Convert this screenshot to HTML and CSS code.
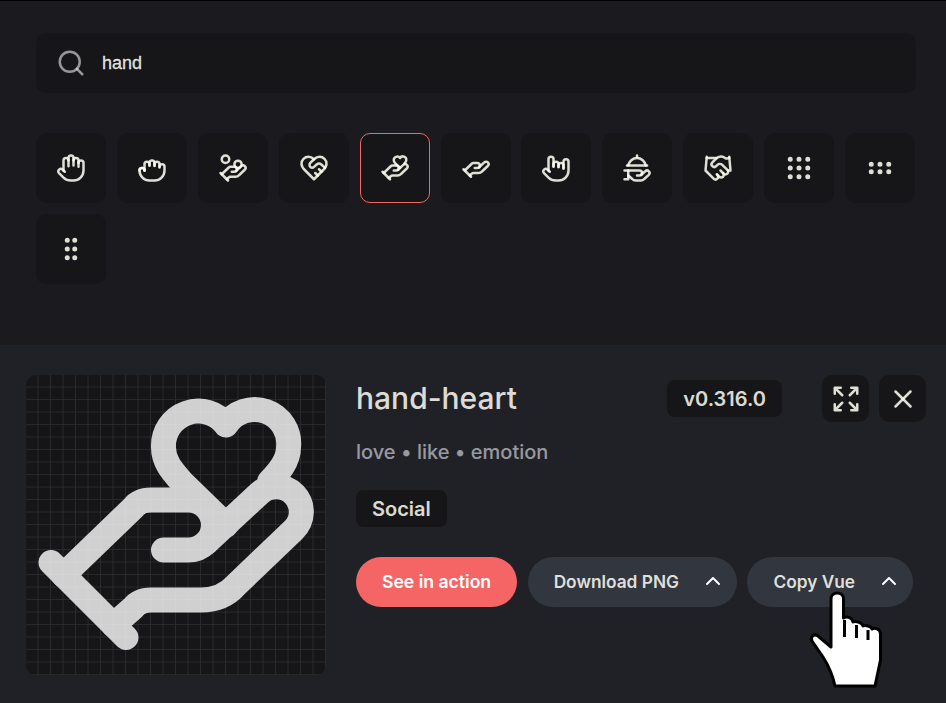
FILE: index.html
```html
<!DOCTYPE html>
<html lang="en">
<head>
    <meta charset="UTF-8">
    <title>hand-heart</title>
    <link rel="stylesheet" href="styles.css">
</head>
<body>
    <div class="browse">
        <!-- Search -->
        <div class="search">
            <svg class="icon search-icon" viewBox="0 0 24 24"><circle cx="11" cy="11" r="8"/><path d="m21 21-4.3-4.3"/></svg>
            <span class="search-text">hand</span>
        </div>

        <!-- Results -->
        <div class="icon-grid">
            <div class="tile"><svg class="icon" viewBox="0 0 24 24"><path d="M18 11V6a2 2 0 0 0-2-2v0a2 2 0 0 0-2 2v0"/><path d="M14 10V4a2 2 0 0 0-2-2v0a2 2 0 0 0-2 2v2"/><path d="M10 10.5V6a2 2 0 0 0-2-2v0a2 2 0 0 0-2 2v8"/><path d="M18 8a2 2 0 1 1 4 0v6a8 8 0 0 1-8 8h-2c-2.8 0-4.5-.86-5.99-2.34l-3.6-3.6a2 2 0 0 1 2.83-2.82L7 15"/></svg></div>
            <div class="tile"><svg class="icon" viewBox="0 0 24 24"><path d="M18 11.5V9a2 2 0 0 0-2-2v0a2 2 0 0 0-2 2v1.4"/><path d="M14 10V8a2 2 0 0 0-2-2v0a2 2 0 0 0-2 2v2"/><path d="M10 9.9V9a2 2 0 0 0-2-2v0a2 2 0 0 0-2 2v5"/><path d="M6 14v0a2 2 0 0 0-2-2v0a2 2 0 0 0-2 2v0"/><path d="M18 11v0a2 2 0 1 1 4 0v3a8 8 0 0 1-8 8h-4a8 8 0 0 1-8-8 2 2 0 1 1 4 0"/></svg></div>
            <div class="tile"><svg class="icon" viewBox="0 0 24 24"><path d="M11 15h2a2 2 0 1 0 0-4h-3c-.6 0-1.1.2-1.4.6L3 17"/><path d="m7 21 1.6-1.4c.3-.4.8-.6 1.4-.6h4c1.1 0 2.1-.4 2.8-1.2l4.6-4.4a2 2 0 0 0-2.75-2.91l-4.2 3.9"/><path d="m2 16 6 6"/><circle cx="16" cy="9" r="2.9"/><circle cx="6" cy="5" r="3"/></svg></div>
            <div class="tile"><svg class="icon" viewBox="0 0 24 24"><path d="M19 14c1.49-1.46 3-3.21 3-5.5A5.5 5.5 0 0 0 16.5 3c-1.76 0-3 .5-4.5 2-1.5-1.5-2.74-2-4.5-2A5.5 5.5 0 0 0 2 8.5c0 2.3 1.5 4.05 3 5.5l7 7Z"/><path d="M12 5 9.04 7.96a2.17 2.17 0 0 0 0 3.08v0c.82.82 2.13.85 3 .07l2.07-1.9a2.82 2.82 0 0 1 3.79 0l2.96 2.66"/><path d="m18 15-2-2"/><path d="m15 18-2-2"/></svg></div>
            <div class="tile tile-active"><svg class="icon" viewBox="0 0 24 24"><path d="M11 14h2a2 2 0 1 0 0-4h-3c-.6 0-1.1.2-1.4.6L3 16"/><path d="m7 20 1.6-1.4c.3-.4.8-.6 1.4-.6h4c1.1 0 2.1-.4 2.8-1.2l4.6-4.4a2 2 0 0 0-2.75-2.91l-4.2 3.9"/><path d="m2 15 6 6"/><path d="M19.5 8.5c.7-.7 1.5-1.6 1.5-2.7A2.73 2.73 0 0 0 16 4a2.78 2.78 0 0 0-5 1.8c0 1.2.8 2 1.5 2.8L16 12"/></svg></div>
            <div class="tile"><svg class="icon" viewBox="0 0 24 24"><path d="M11 12h2a2 2 0 1 0 0-4h-3c-.6 0-1.1.2-1.4.6L3 14"/><path d="m7 18 1.6-1.4c.3-.4.8-.6 1.4-.6h4c1.1 0 2.1-.4 2.8-1.2l4.6-4.4a2 2 0 0 0-2.75-2.91l-4.2 3.9"/><path d="m2 13 6 6"/></svg></div>
            <div class="tile"><svg class="icon" viewBox="0 0 24 24"><path d="M18 12.5V10a2 2 0 0 0-2-2v0a2 2 0 0 0-2 2v1.4"/><path d="M14 11V9a2 2 0 1 0-4 0v2"/><path d="M10 10.5V5a2 2 0 1 0-4 0v9"/><path d="m7 15-1.76-1.76a2 2 0 0 0-2.83 2.82l3.6 3.6C7.5 21.14 9.2 22 12 22h2a8 8 0 0 0 8-8V7a2 2 0 1 0-4 0v5"/></svg></div>
            <div class="tile"><svg class="icon" viewBox="0 0 24 24"><path d="M12 3V2"/><path d="M5 10a7.1 7.1 0 0 1 14 0"/><path d="M4 10h16"/><path d="M2 14h12a2 2 0 1 1 0 4h-2"/><path d="m15.4 17.4 3.2-2.8a2 2 0 0 1 2.8 2.9l-3.6 3.3c-.7.8-1.7 1.2-2.8 1.2h-4c-1.1 0-2.1-.4-2.8-1.2L5 18"/><path d="M5 14v7H2"/></svg></div>
            <div class="tile"><svg class="icon" viewBox="0 0 24 24"><path d="m11 17 2 2a1 1 0 1 0 3-3"/><path d="m14 14 2.5 2.5a1 1 0 1 0 3-3l-3.88-3.88a3 3 0 0 0-4.24 0l-.88.88a1 1 0 1 1-3-3l2.81-2.81a5.79 5.79 0 0 1 7.06-.87l.47.28a2 2 0 0 0 1.42.25L21 4"/><path d="m21 3 1 11h-2"/><path d="M3 3 2 14l6.5 6.5a1 1 0 1 0 3-3"/><path d="M3 4h8"/></svg></div>
            <div class="tile"><svg class="icon" viewBox="0 0 24 24"><circle cx="12" cy="5" r="1"/><circle cx="19" cy="5" r="1"/><circle cx="5" cy="5" r="1"/><circle cx="12" cy="12" r="1"/><circle cx="19" cy="12" r="1"/><circle cx="5" cy="12" r="1"/><circle cx="12" cy="19" r="1"/><circle cx="19" cy="19" r="1"/><circle cx="5" cy="19" r="1"/></svg></div>
            <div class="tile"><svg class="icon" viewBox="0 0 24 24"><circle cx="12" cy="9" r="1"/><circle cx="19" cy="9" r="1"/><circle cx="5" cy="9" r="1"/><circle cx="12" cy="15" r="1"/><circle cx="19" cy="15" r="1"/><circle cx="5" cy="15" r="1"/></svg></div>
            <div class="tile"><svg class="icon" viewBox="0 0 24 24"><circle cx="9" cy="12" r="1"/><circle cx="9" cy="5" r="1"/><circle cx="9" cy="19" r="1"/><circle cx="15" cy="12" r="1"/><circle cx="15" cy="5" r="1"/><circle cx="15" cy="19" r="1"/></svg></div>
        </div>
    </div>

    <!-- Selected icon -->
    <div class="detail">
        <div class="preview">
            <svg class="preview-svg" viewBox="0 0 24 24">
                <defs>
                    <pattern id="gridCell" width="1" height="1" patternUnits="userSpaceOnUse">
                        <path class="grid-line" d="M1 0V1M0 1H1"/>
                    </pattern>
                </defs>
                <rect width="24" height="24" fill="url(#gridCell)"/>
                <g class="preview-icon">
                    <path d="M11 14h2a2 2 0 1 0 0-4h-3c-.6 0-1.1.2-1.4.6L3 16"/>
                    <path d="m7 20 1.6-1.4c.3-.4.8-.6 1.4-.6h4c1.1 0 2.1-.4 2.8-1.2l4.6-4.4a2 2 0 0 0-2.75-2.91l-4.2 3.9"/>
                    <path d="m2 15 6 6"/>
                    <path d="M19.5 8.5c.7-.7 1.5-1.6 1.5-2.7A2.73 2.73 0 0 0 16 4a2.78 2.78 0 0 0-5 1.8c0 1.2.8 2 1.5 2.8L16 12"/>
                </g>
            </svg>
        </div>

        <div class="info">
            <div class="info-head">
                <h1 class="icon-name">hand-heart</h1>
                <span class="version">v0.316.0</span>
                <button class="square-btn"><svg class="icon" viewBox="0 0 24 24"><path d="m21 21-6-6m6 6v-4.8m0 4.8h-4.8"/><path d="M3 16.2V21m0 0h4.8M3 21l6-6"/><path d="M21 7.8V3m0 0h-4.8M21 3l-6 6"/><path d="M3 7.8V3m0 0h4.8M3 3l6 6"/></svg></button>
                <button class="square-btn"><svg class="icon" viewBox="0 0 24 24"><path d="M18 6 6 18"/><path d="m6 6 12 12"/></svg></button>
            </div>
            <p class="tags">love • like • emotion</p>
            <span class="category">Social</span>
            <div class="actions">
                <button class="pill pill-brand">See in action</button>
                <button class="pill">Download PNG <svg class="chevron" viewBox="0 0 24 24"><path d="m18 15-6-6-6 6"/></svg></button>
                <button class="pill">Copy Vue <svg class="chevron" viewBox="0 0 24 24"><path d="m18 15-6-6-6 6"/></svg></button>
            </div>
        </div>
    </div>

    <!-- Mouse pointer from the screen capture -->
    <svg class="pointer" viewBox="0 0 85 105">
        <path class="pointer-hand" d="M26 11C26 3 38.5 3 38.5 11V30C41 28 47 29 48 34C50 33 57 34 58 38C60 37 66 38 67 41C70 39 75.500 41 75.500 46V72L70 98H30C28 88 23 77 18 69L7 53C5 49 9 45 13 48L26 59Z"/>
        <path class="pointer-gap" d="M39.500 32V49M51.500 37V50M63 42V52"/>
    </svg>
</body>
</html>
```

FILE: styles.css
```css
* {
    box-sizing: border-box;
}

body {
    margin: 0;
    height: 703px;
    overflow: hidden;
    position: relative;
    background-color: #1b1b1f;
    color: rgba(255, 255, 245, 0.86);
    font-family: Inter, sans-serif;
    border-top: 1px solid #000;
}

.icon {
    width: 30px;
    height: 30px;
    fill: none;
    stroke: currentColor;
    stroke-width: 2;
    stroke-linecap: round;
    stroke-linejoin: round;
}

/* Search and results */
.browse {
    padding: 32px 30px 61px 36px;
}

.search {
    display: flex;
    align-items: center;
    gap: 16px;
    height: 60px;
    padding-left: 20px;
    background-color: #161618;
    border-radius: 10px;
}

.search-icon {
    color: rgba(235, 235, 245, 0.6);
}

.search-text {
    font-family: "Liberation Sans", sans-serif;
    font-size: 18px;
    -webkit-text-stroke: 0.3px currentColor;
}

.icon-grid {
    display: grid;
    grid-template-columns: repeat(11, 70px);
    column-gap: 10.91px;
    row-gap: 11px;
    margin-top: 40px;
}

.tile {
    display: flex;
    align-items: center;
    justify-content: center;
    height: 70px;
    background-color: #161618;
    border-radius: 10px;
}

.tile-active {
    border: 1px solid #f56565;
}

/* Detail panel */
.detail {
    display: flex;
    gap: 30px;
    height: 358px;
    padding: 30px 20px 0 26px;
    background-color: #202127;
}

.preview {
    width: 300px;
    height: 300px;
    flex-shrink: 0;
    background-color: #161618;
    border-radius: 10px;
    overflow: hidden;
}

.preview-svg {
    display: block;
    width: 100%;
    height: 100%;
}

.grid-line {
    fill: none;
    stroke: #777;
    stroke-opacity: 0.26;
    stroke-width: 0.12;
}

.preview-icon {
    fill: none;
    stroke: #fff;
    stroke-width: 2;
    stroke-linecap: round;
    stroke-linejoin: round;
    opacity: 0.8;
}

.info {
    flex: 1;
}

.info-head {
    display: flex;
    align-items: center;
    gap: 10px;
}

.icon-name {
    flex: 1;
    margin: 0;
    font-size: 30px;
    font-weight: 530;
    line-height: 47px;
}

.version {
    margin-right: 30px;
    padding: 0 16px;
    height: 37px;
    line-height: 39px;
    font-size: 20px;
    font-weight: 600;
    background-color: #161618;
    border-radius: 8px;
}

.square-btn {
    display: flex;
    align-items: center;
    justify-content: center;
    width: 47px;
    height: 47px;
    padding: 0;
    color: inherit;
    background-color: #161618;
    border: none;
    border-radius: 10px;
}

.tags {
    margin: 18px 0 0;
    font-size: 20px;
    font-weight: 550;
    line-height: 24px;
    color: rgba(235, 235, 245, 0.6);
}

.category {
    display: inline-block;
    margin-top: 26px;
    padding: 0 16px;
    height: 37px;
    line-height: 39px;
    font-size: 20px;
    font-weight: 600;
    background-color: #161618;
    border-radius: 8px;
}

.actions {
    display: flex;
    gap: 10.5px;
    margin-top: 30px;
}

.pill {
    display: flex;
    align-items: center;
    gap: 22px;
    height: 50px;
    padding: 0 12px 2px 26px;
    font-family: inherit;
    font-size: 17.3px;
    font-weight: 600;
    color: inherit;
    background-color: #32363f;
    border: none;
    border-radius: 25px;
}

.pill-brand {
    padding: 0 26px 2px;
    font-size: 17.6px;
    color: #fff;
    background-color: #f56565;
}

.chevron {
    width: 24px;
    height: 24px;
    fill: none;
    stroke: #fff;
    stroke-width: 2;
    stroke-linecap: round;
    stroke-linejoin: round;
}

/* Pointer */
.pointer {
    position: absolute;
    left: 805px;
    top: 587px;
    width: 85px;
    height: 105px;
}

.pointer-hand {
    fill: #fff;
    stroke: #000;
    stroke-width: 3;
    stroke-linejoin: round;
}

.pointer-gap {
    fill: none;
    stroke: #000;
    stroke-width: 3;
}
```
